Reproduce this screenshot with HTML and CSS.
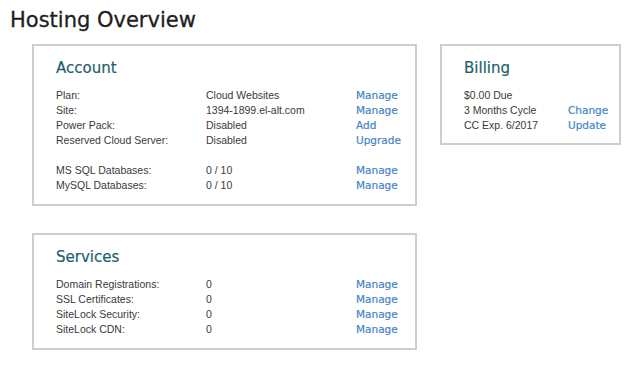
FILE: index.html
```html
<!DOCTYPE html>
<html lang="en">
<head>
    <meta charset="UTF-8">
    <meta name="viewport" content="width=device-width, initial-scale=1.0">
    <title>Hosting Overview</title>
    <link rel="stylesheet" href="styles.css">
</head>
<body>

<div class="page">
    <h1 class="page-title">Hosting Overview</h1>

    <div class="overview">
        <div class="main-col">
            <!-- Account -->
            <div class="panel">
                <h2 class="panel-title">Account</h2>
                <div class="rows">
                    <span>Plan:</span><span>Cloud Websites</span><a href="#">Manage</a>
                    <span>Site:</span><span>1394-1899.el-alt.com</span><a href="#">Manage</a>
                    <span>Power Pack:</span><span>Disabled</span><a href="#">Add</a>
                    <span>Reserved Cloud Server:</span><span>Disabled</span><a href="#">Upgrade</a>
                    <span class="spacer"></span>
                    <span>MS SQL Databases:</span><span>0 / 10</span><a href="#">Manage</a>
                    <span>MySQL Databases:</span><span>0 / 10</span><a href="#">Manage</a>
                </div>
            </div>

            <!-- Services -->
            <div class="panel">
                <h2 class="panel-title">Services</h2>
                <div class="rows">
                    <span>Domain Registrations:</span><span>0</span><a href="#">Manage</a>
                    <span>SSL Certificates:</span><span>0</span><a href="#">Manage</a>
                    <span>SiteLock Security:</span><span>0</span><a href="#">Manage</a>
                    <span>SiteLock CDN:</span><span>0</span><a href="#">Manage</a>
                </div>
            </div>
        </div>

        <!-- Billing -->
        <div class="panel billing">
            <h2 class="panel-title">Billing</h2>
            <div class="rows billing-rows">
                <span>$0.00 Due</span><span></span>
                <span>3 Months Cycle</span><a href="#">Change</a>
                <span>CC Exp. 6/2017</span><a href="#">Update</a>
            </div>
        </div>
    </div>
</div>

</body>
</html>
```

FILE: styles.css
```css
/* Global Styles */
body {
    margin: 0;
    background: #fff;
    font-family: "Liberation Sans", Arial, sans-serif;
    color: #3a3a3a;
}

.page {
    padding: 7px 10px;
}

/* Page Heading */
.page-title {
    margin: 0 0 11px;
    font-family: "DejaVu Sans", sans-serif;
    font-weight: normal;
    font-size: 21px;
    line-height: 26px;
    color: #1e1e1e;
    -webkit-text-stroke: 0.3px #1e1e1e;
}

/* Layout */
.overview {
    display: flex;
    align-items: flex-start;
    gap: 23px;
    padding-left: 22px;
}

.main-col {
    display: flex;
    flex-direction: column;
    gap: 27px;
    width: 385px;
}

/* Panels */
.panel {
    border: 2px solid #cfcfc8;
    padding: 12px 22px 11px;
}

.billing {
    width: 181px;
    box-sizing: border-box;
    padding-bottom: 10px;
}

.panel-title {
    margin: 0 0 10px;
    font-family: "DejaVu Sans", sans-serif;
    font-weight: normal;
    font-size: 15px;
    line-height: 20px;
    color: #1f5f6e;
    -webkit-text-stroke: 0.2px #1f5f6e;
}

/* Rows */
.rows {
    display: grid;
    grid-template-columns: 150px 150px auto;
    font-size: 10.5px;
    line-height: 15px;
}

.billing-rows {
    grid-template-columns: 104px auto;
}

.spacer {
    grid-column: 1 / -1;
    height: 15px;
}

.rows a {
    font-family: "DejaVu Sans", sans-serif;
    font-size: 10.5px;
    color: #4685c6;
    text-decoration: none;
    -webkit-text-stroke: 0.2px #4685c6;
}
```
